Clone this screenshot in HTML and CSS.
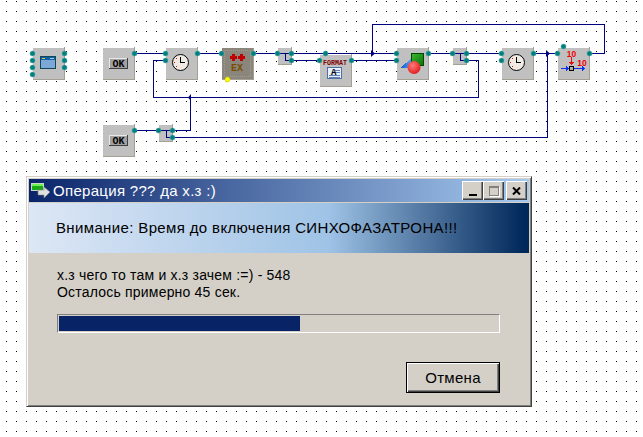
FILE: index.html
```html
<!DOCTYPE html>
<html lang="ru">
<head>
    <meta charset="UTF-8">
    <title>Операция ??? да х.з :)</title>
    <link rel="stylesheet" href="styles.css">
</head>
<body>
    <div class="canvas">
        <svg class="scheme" width="643" height="437" viewBox="0 0 643 437">
            <defs>
                <pattern id="dots" x="6" y="1" width="10" height="10" patternUnits="userSpaceOnUse">
                    <rect width="1" height="1" fill="#000"/>
                </pattern>
                <radialGradient id="ball" cx="0.4" cy="0.35" r="0.7">
                    <stop offset="0" stop-color="#ff7a7a"/>
                    <stop offset="1" stop-color="#e01818"/>
                </radialGradient>
                <linearGradient id="cube" x1="0" y1="0" x2="1" y2="1">
                    <stop offset="0" stop-color="#40b830"/>
                    <stop offset="1" stop-color="#087008"/>
                </linearGradient>
                <linearGradient id="cone" x1="0" y1="0" x2="1" y2="0">
                    <stop offset="0" stop-color="#0a50c8"/>
                    <stop offset="1" stop-color="#58a0f0"/>
                </linearGradient>

                <!-- block bodies -->
                <g id="block">
                    <rect width="32" height="32" class="block-shade"/>
                    <rect width="31" height="31" class="block-face"/>
                    <rect x="31" y="-1" width="1" height="1" class="block-shade"/>
                </g>
                <g id="split">
                    <rect width="14" height="17" class="block-shade"/>
                    <rect width="13" height="16" class="block-face"/>
                    <rect x="13" y="-1" width="1" height="1" class="block-shade"/>
                    <path d="M0 5.500H13M7.500 5.500V12.500H13" class="wire"/>
                </g>
                <g id="okbtn">
                    <rect width="19" height="11" fill="#404040"/>
                    <rect width="18" height="10" fill="#e8e8e8"/>
                    <rect x="1" y="1" width="17" height="9" fill="#a0a0a0"/>
                    <text x="9.500" y="9" class="ok-label">OK</text>
                </g>
                <g id="clock">
                    <circle r="8" class="clock-face"/>
                    <path d="M0 -6V0H4" class="clock-hand"/>
                    <path d="M0 -6.500h.8M6 0h.8M-6.800 0h.8M0 6h.8M-4.800 -4.500h.8M4 -4.500h.8M-4.800 4h.8M4 4h.8" class="clock-ticks"/>
                </g>
                <circle id="port" cx="0.5" cy="0.5" r="2.5" class="port"/>
            </defs>

            <rect width="643" height="437" fill="url(#dots)"/>

            <!-- wires -->
            <g class="wires">
                <path d="M134.500 53.500H165"/>
                <path d="M197 53.500H221"/>
                <path d="M253 53.500H277"/>
                <path d="M291 53.500H396"/>
                <path d="M291 60.500H319"/>
                <path d="M351 60.500H396"/>
                <path d="M428 53.500H452"/>
                <path d="M466 53.500H501"/>
                <path d="M466 60.500H478.500V97.500H153.500V60.500H165"/>
                <path d="M533 53.500H557"/>
                <path d="M589 53.500H604.500V24.500H372.500V53.500"/>
                <path d="M134.500 130.500H158"/>
                <path d="M172 130.500H190.500V97.500"/>
                <path d="M172 137.500H547.500V53.500"/>
            </g>
            <path d="M371 50L375 53.500L371 57Z" class="joint"/>
            <path d="M546 50L550 53.500L546 57Z" class="joint"/>
            <path d="M191 94L188 97.500L191 101Z" class="joint"/>

            <!-- window block -->
            <use href="#block" x="33" y="48"/>
            <rect x="40.500" y="56.500" width="15" height="12" fill="#7ca8d8" stroke="#104858"/>
            <rect x="41" y="57" width="14" height="3" fill="#1060a8"/>
            <rect x="42" y="58" width="3" height="1" fill="#e0c040"/>
            <rect x="50" y="58" width="4" height="1" fill="#a0d0f0"/>

            <!-- ok and timer -->
            <use href="#block" x="103" y="48"/>
            <use href="#okbtn" x="109" y="58"/>
            <use href="#block" x="166" y="48"/>
            <use href="#clock" x="180.500" y="62.500"/>

            <!-- fx block -->
            <rect x="222" y="48" width="32" height="32" fill="#a4a094"/>
            <rect x="222" y="48" width="31" height="31" fill="#8a867c"/>
            <rect x="224.500" y="50.500" width="26" height="26" class="fx-frame"/>
            <path d="M233 53.500V60.500M229.500 57H236.500M241 53.500V60.500M237.500 57H244.500" class="fx-plus"/>
            <text x="237" y="71" class="fx-label">EX</text>

            <use href="#split" x="278" y="48"/>

            <!-- format block -->
            <use href="#block" x="320" y="55"/>
            <text x="335" y="65" class="format-label" textLength="24" lengthAdjust="spacingAndGlyphs">FORMAT</text>
            <rect x="327.500" y="67.500" width="14" height="11" fill="#e8f0ff" stroke="#5070a8"/>
            <path d="M335 70.500H340M335 72.500H340M329 75.500H340M329 77.500H340" stroke="#6080b0"/>
            <text x="331" y="75" class="doc-label">A</text>

            <!-- shapes block -->
            <use href="#block" x="397" y="48"/>
            <rect x="411.500" y="53.500" width="12" height="12" fill="url(#cube)" stroke="#004800"/>
            <path d="M400 68L411 59V68Z" fill="url(#cone)"/>
            <circle cx="414" cy="67.500" r="6.500" fill="url(#ball)" class="round"/>

            <use href="#split" x="453" y="48"/>
            <use href="#block" x="502" y="48"/>
            <use href="#clock" x="516.500" y="62.500"/>

            <!-- value block -->
            <use href="#block" x="558" y="48"/>
            <text x="571.500" y="56.500" class="num-label">10</text>
            <text x="582" y="66" class="num-label">10</text>
            <path d="M571.500 57V63" stroke="#e01010"/>
            <path d="M569 62L571.500 65L574 62Z" fill="#e01010"/>
            <path d="M561 68.500H568M574 68.500H584" stroke="#1030f0"/>
            <path d="M566 66L569 68.500L566 71ZM582 66L585 68.500L582 71Z" fill="#1030f0"/>
            <rect x="569.500" y="66.500" width="4" height="4" fill="#b0b0a8" stroke="#000"/>

            <!-- lower row -->
            <use href="#block" x="103" y="125"/>
            <use href="#okbtn" x="109" y="135"/>
            <use href="#split" x="159" y="125"/>

            <!-- ports -->
            <use href="#port" x="32" y="53"/><use href="#port" x="32" y="60"/><use href="#port" x="32" y="67"/><use href="#port" x="32" y="74"/>
            <use href="#port" x="64" y="53"/><use href="#port" x="64" y="60"/><use href="#port" x="64" y="67"/>
            <use href="#port" x="134" y="53"/>
            <use href="#port" x="165" y="53"/><use href="#port" x="165" y="60"/><use href="#port" x="197" y="53"/>
            <use href="#port" x="221" y="53"/><use href="#port" x="253" y="53"/>
            <circle cx="227.500" cy="79.500" r="2.500" class="port-event"/>
            <use href="#port" x="277" y="53"/><use href="#port" x="291" y="53"/><use href="#port" x="291" y="60"/>
            <use href="#port" x="325" y="53"/><use href="#port" x="319" y="60"/><use href="#port" x="351" y="60"/>
            <use href="#port" x="396" y="53"/><use href="#port" x="396" y="60"/><use href="#port" x="428" y="53"/>
            <use href="#port" x="452" y="53"/><use href="#port" x="466" y="53"/><use href="#port" x="466" y="60"/>
            <use href="#port" x="501" y="53"/><use href="#port" x="501" y="60"/><use href="#port" x="533" y="53"/>
            <use href="#port" x="557" y="53"/><use href="#port" x="563" y="46"/><use href="#port" x="589" y="53"/>
            <use href="#port" x="134" y="130"/>
            <use href="#port" x="158" y="130"/><use href="#port" x="172" y="130"/><use href="#port" x="172" y="137"/>
        </svg>

        <div class="dialog">
            <div class="titlebar">
                <svg class="title-icon" width="19" height="16" viewBox="0 0 19 16">
                    <rect x="0" y="0" width="13" height="8" fill="#c8d8c8"/>
                    <rect x="1" y="1" width="11" height="2" fill="#70f050"/>
                    <rect x="1" y="3" width="11" height="4" fill="#18a818"/>
                    <path d="M7 7H13V4L19 9L13 15V12H7Z" fill="#e0e0e0" stroke="#808080" stroke-width="0.6"/>
                </svg>
                <span class="title-text">Операция ??? да х.з :)</span>
                <div class="title-buttons">
                    <span class="win-btn"><i class="glyph-min"></i></span>
                    <span class="win-btn"><i class="glyph-max"></i></span>
                    <span class="win-btn win-btn-close">
                        <svg width="9" height="8" viewBox="0 0 9 8"><path d="M1 0.500L8 7.500M8 0.500L1 7.500" stroke="#000" stroke-width="2"/></svg>
                    </span>
                </div>
            </div>
            <div class="banner">Внимание: Время до включения СИНХОФАЗАТРОНА!!!</div>
            <div class="content">
                <p class="status">х.з чего то там и х.з зачем :=) - 548<br>Осталось примерно 45 сек.</p>
                <div class="progress"><div class="progress-fill" style="width: 241px"></div></div>
                <div class="actions"><button class="cancel" type="button">Отмена</button></div>
            </div>
        </div>
    </div>
</body>
</html>
```

FILE: styles.css
```css
html, body {
    margin: 0;
    padding: 0;
    background: #fff;
}
.canvas {
    position: relative;
    width: 643px;
    height: 437px;
    overflow: hidden;
}
.scheme {
    display: block;
    shape-rendering: crispEdges;
}

/* scheme parts */
.block-face { fill: #c0c0c0; }
.block-shade { fill: #a4a094; }
.wires path, .wire {
    fill: none;
    stroke: #000080;
    stroke-width: 1;
}
.joint {
    fill: #000080;
    shape-rendering: geometricPrecision;
}
.round { shape-rendering: geometricPrecision; }
.port {
    fill: #008080;
    stroke: #50a8a0;
    stroke-width: 0.5;
    shape-rendering: geometricPrecision;
}
.port-event {
    fill: #ffff00;
    stroke: #c0c000;
    stroke-width: 0.5;
    shape-rendering: geometricPrecision;
}
.clock-face {
    fill: #f0ece4;
    stroke: #000;
    stroke-width: 1;
    shape-rendering: geometricPrecision;
}
.clock-hand {
    fill: none;
    stroke: #000;
}
.clock-ticks {
    fill: none;
    stroke: #d01010;
}
.fx-frame {
    fill: none;
    stroke: #a09c90;
    stroke-dasharray: 1 1;
}
.fx-plus {
    fill: none;
    stroke: #c00000;
    stroke-width: 3;
}
.ok-label, .fx-label, .format-label, .doc-label {
    font-family: "Liberation Mono", monospace;
    font-weight: bold;
    text-anchor: middle;
}
.ok-label { font-size: 10px; fill: #000; }
.fx-label { font-size: 10px; fill: #7a4c00; }
.format-label { font-size: 8px; fill: #800000; }
.doc-label { font-size: 9px; fill: #000; text-anchor: start; }
.num-label {
    font-family: "Liberation Sans", sans-serif;
    font-size: 8.500px;
    font-weight: bold;
    fill: #f00000;
    text-anchor: middle;
}

/* progress window */
.dialog {
    position: absolute;
    left: 26px;
    top: 176px;
    width: 506px;
    height: 231px;
    box-sizing: border-box;
    padding: 2px 2px 1px;
    background: #d4d0c8;
    border: 1px solid;
    border-color: #d4d0c8 #404040 #404040 #d4d0c8;
    box-shadow: inset 1px 1px 0 #fff, inset -1px -1px 0 #808080;
    display: flex;
    flex-direction: column;
    font-family: "Liberation Sans", Arial, sans-serif;
    color: #000;
}
.titlebar {
    height: 23px;
    margin-bottom: 1px;
    flex: none;
    display: flex;
    align-items: center;
    padding: 0 2px;
    background: linear-gradient(to right, #0a246a, #a6caf0);
    color: #fff;
    font-size: 15px;
    letter-spacing: 0.3px;
}
.title-icon {
    margin-right: 3px;
    flex: none;
}
.title-text {
    flex: 1;
}
.title-buttons {
    display: flex;
}
.win-btn {
    width: 21px;
    height: 19px;
    background: #d4d0c8;
    box-shadow: inset 1px 1px 0 #fff, inset -1px -1px 0 #404040, inset -2px -2px 0 #808080;
    display: flex;
    align-items: center;
    justify-content: center;
}
.win-btn-close { margin-left: 2px; }
.glyph-min {
    width: 8px;
    height: 2px;
    background: #000;
    margin-top: 9px;
}
.glyph-max {
    width: 8px;
    height: 7px;
    border: 1px solid #808080;
    border-top-width: 2px;
    box-shadow: 1px 1px 0 #fff;
}
.banner {
    height: 50px;
    flex: none;
    padding-left: 27px;
    line-height: 50px;
    font-size: 15px;
    letter-spacing: 0.36px;
    white-space: nowrap;
    background: linear-gradient(to right, #dde7f5, #9fc3e6 60%, #00285a 99%);
}
.content {
    flex: 1;
    display: flex;
    flex-direction: column;
    padding: 0 29px 12px 28px;
}
.status {
    margin: 14px 0 0;
    line-height: 17px;
    font-size: 14px;
    letter-spacing: 0.2px;
}
.progress {
    height: 19px;
    margin-top: 13px;
    box-sizing: border-box;
    border: 1px solid;
    border-color: #808080 #fff #fff #808080;
    padding: 1px;
}
.progress-fill {
    height: 15px;
    background: #082466;
}
.actions {
    margin-top: auto;
    display: flex;
    justify-content: flex-end;
}
.cancel {
    width: 94px;
    height: 31px;
    box-sizing: border-box;
    border: 1px solid #000;
    background: #d4d0c8;
    box-shadow: inset 1px 1px 0 #fff, inset -1px -1px 0 #404040, inset -2px -2px 0 #808080;
    font-family: "Liberation Sans", Arial, sans-serif;
    font-size: 15px;
    letter-spacing: 0.3px;
    color: #000;
    padding: 0;
}
```
